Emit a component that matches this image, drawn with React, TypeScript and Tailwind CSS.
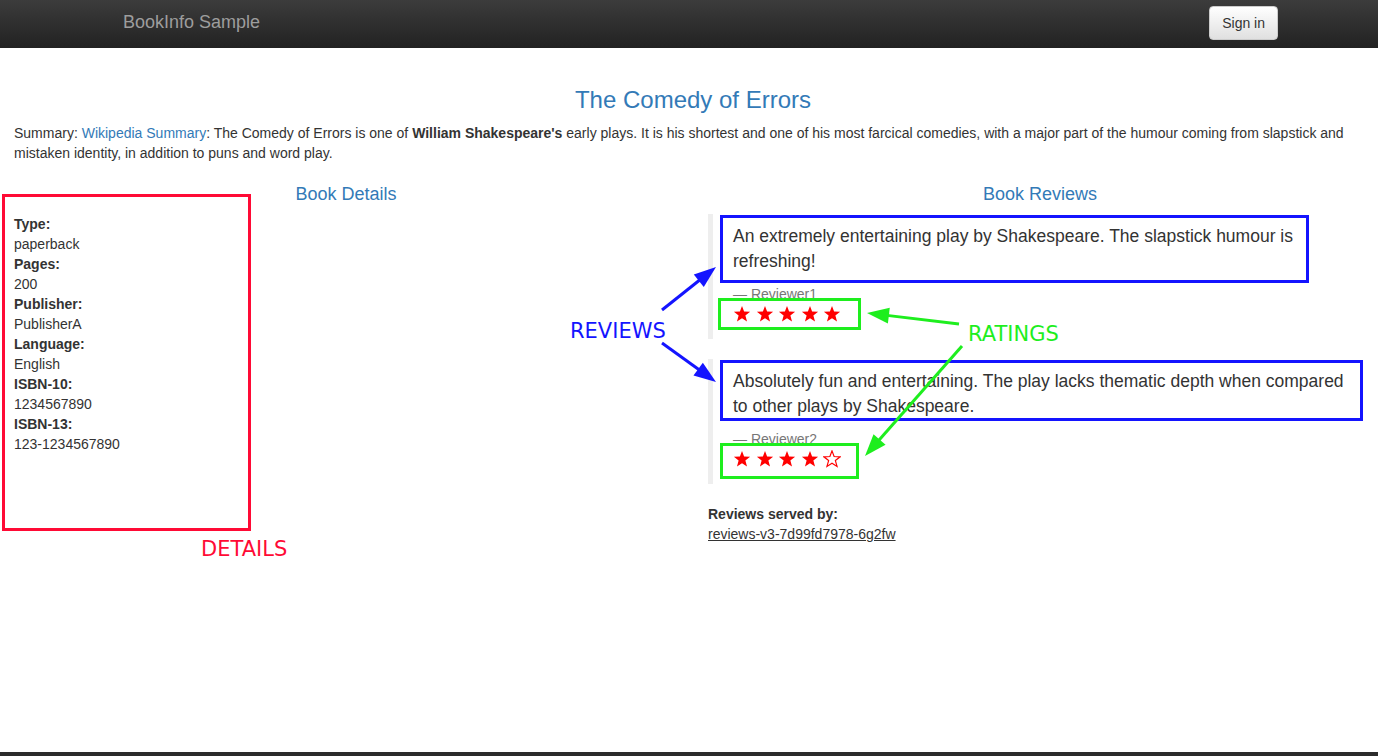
import React from "react";

const sans = { fontFamily: '"Liberation Sans", Arial, Helvetica, sans-serif' };

function Star({ filled }: { filled: boolean }) {
  return (
    <svg width="18" height="18" viewBox="0 0 24 24" className="block">
      <polygon
        points="12,1.2 14.8,8.7 22.8,9.1 16.5,14.1 18.7,21.9 12,17.5 5.3,21.9 7.5,14.1 1.2,9.1 9.2,8.7"
        fill={filled ? "#ff0000" : "none"}
        stroke="#ff0000"
        strokeWidth={filled ? 0 : 1.6}
        strokeLinejoin="miter"
      />
    </svg>
  );
}

function Stars({ count }: { count: number }) {
  return (
    <div className="flex h-[25px] items-start gap-[4.5px] pt-[1px]">
      {[0, 1, 2, 3, 4].map((i) => (
        <Star key={i} filled={i < count} />
      ))}
    </div>
  );
}

function Review({ text, reviewer, stars }: { text: string; reviewer: string; stars: number }) {
  return (
    <blockquote className="mb-5 border-l-[5px] border-[#eeeeee] px-5 py-[10px] text-[17.5px] leading-[25px]">
      <p className="mb-[10px] text-[#333]">{text}</p>
      <small className="block text-[14px] leading-5 text-[#777]">— {reviewer}</small>
      <Stars count={stars} />
    </blockquote>
  );
}

function Arrow({ x1, y1, x2, y2, color }: { x1: number; y1: number; x2: number; y2: number; color: string }) {
  const dx = x2 - x1;
  const dy = y2 - y1;
  const len = Math.hypot(dx, dy);
  const ux = dx / len;
  const uy = dy / len;
  const hl = 22;
  const hw = 8;
  const bx = x2 - ux * hl;
  const by = y2 - uy * hl;
  const p1 = `${bx - uy * hw},${by + ux * hw}`;
  const p2 = `${bx + uy * hw},${by - ux * hw}`;
  return (
    <g>
      <line x1={x1} y1={y1} x2={bx + ux * 2} y2={by + uy * 2} stroke={color} strokeWidth={3} />
      <polygon points={`${x2},${y2} ${p1} ${p2}`} fill={color} />
    </g>
  );
}

const details: [string, string][] = [
  ["Type:", "paperback"],
  ["Pages:", "200"],
  ["Publisher:", "PublisherA"],
  ["Language:", "English"],
  ["ISBN-10:", "1234567890"],
  ["ISBN-13:", "123-1234567890"],
];

export default function App() {
  return (
    <div className="relative flex h-[756px] flex-col overflow-hidden bg-white text-[14px] leading-5 text-[#333]" style={sans}>
      {/* top navigation bar */}
      <nav className="flex h-[48px] shrink-0 items-start justify-between bg-gradient-to-b from-[#3c3c3c] to-[#222222] pl-[123px] pr-[100px]">
        <span className="pt-[12px] text-[18px] leading-5 text-[#9d9d9d]">BookInfo Sample</span>
        <button className="mt-[6px] rounded-[4px] border border-[#cccccc] bg-gradient-to-b from-white to-[#e0e0e0] px-3 py-[6px] text-[14px] leading-5 text-[#333]">
          Sign in
        </button>
      </nav>

      <main className="flex-1 pl-[14px] pr-[6px]">
        <h3 className="mt-[39px] mb-[10px] text-center text-[24px] leading-[26.4px] text-[#337ab7]">The Comedy of Errors</h3>
        <p className="mb-[12px]">
          Summary: <a className="text-[#337ab7]">Wikipedia Summary</a>: The Comedy of Errors is one of{" "}
          <b>William Shakespeare's</b> early plays. It is his shortest and one of his most farcical comedies, with a major
          part of the humour coming from slapstick and mistaken identity, in addition to puns and word play.
        </p>

        <div className="grid grid-cols-2 gap-[30px]">
          {/* book details */}
          <section>
            <h4 className="mt-[10px] mb-[9px] text-center text-[18px] leading-[19.8px] text-[#337ab7]">Book Details</h4>
            <dl>
              {details.map(([k, v]) => (
                <React.Fragment key={k}>
                  <dt className="font-bold">{k}</dt>
                  <dd>{v}</dd>
                </React.Fragment>
              ))}
            </dl>
          </section>

          {/* book reviews */}
          <section>
            <h4 className="mt-[10px] mb-[9px] text-center text-[18px] leading-[19.8px] text-[#337ab7]">Book Reviews</h4>
            <Review
              text="An extremely entertaining play by Shakespeare. The slapstick humour is refreshing!"
              reviewer="Reviewer1"
              stars={5}
            />
            <Review
              text="Absolutely fun and entertaining. The play lacks thematic depth when compared to other plays by Shakespeare."
              reviewer="Reviewer2"
              stars={4}
            />
            <dl className="mt-[1px]">
              <dt className="font-bold">Reviews served by:</dt>
              <dd className="underline">reviews-v3-7d99fd7978-6g2fw</dd>
            </dl>
          </section>
        </div>
      </main>

      <div className="h-[4px] shrink-0 bg-[#2b2b2b]" />

      {/* callout layer drawn over the page */}
      <div className="pointer-events-none absolute inset-0" style={{ fontFamily: '"DejaVu Sans", sans-serif' }}>
        <div className="absolute left-[2px] top-[194px] h-[337px] w-[249px] border-[3px] border-[#ff0a35]" />
        <div className="absolute left-[720px] top-[215px] h-[68px] w-[589px] border-[3px] border-[#1414ff]" />
        <div className="absolute left-[720px] top-[360px] h-[61px] w-[643px] border-[3px] border-[#1414ff]" />
        <div className="absolute left-[718px] top-[298px] h-[32px] w-[143px] border-[3px] border-[#1eee1e]" />
        <div className="absolute left-[720px] top-[443px] h-[36px] w-[139px] border-[3px] border-[#1eee1e]" />

        <span className="absolute left-[570px] top-[318px] text-[21px] leading-[26px] text-[#1414ff]">REVIEWS</span>
        <span className="absolute left-[968px] top-[321px] text-[21px] leading-[26px] text-[#1eee1e]">RATINGS</span>
        <span className="absolute left-[201px] top-[536px] text-[21px] leading-[26px] text-[#ff0a35]">DETAILS</span>

        <svg className="absolute inset-0" width="1378" height="756">
          <Arrow x1={662} y1={310} x2={716} y2={267} color="#1414ff" />
          <Arrow x1={662} y1={343} x2={716} y2={382} color="#1414ff" />
          <Arrow x1={959} y1={324} x2={867} y2={313} color="#1eee1e" />
          <Arrow x1={962} y1={346} x2={865} y2={456} color="#1eee1e" />
        </svg>
      </div>
    </div>
  );
}
